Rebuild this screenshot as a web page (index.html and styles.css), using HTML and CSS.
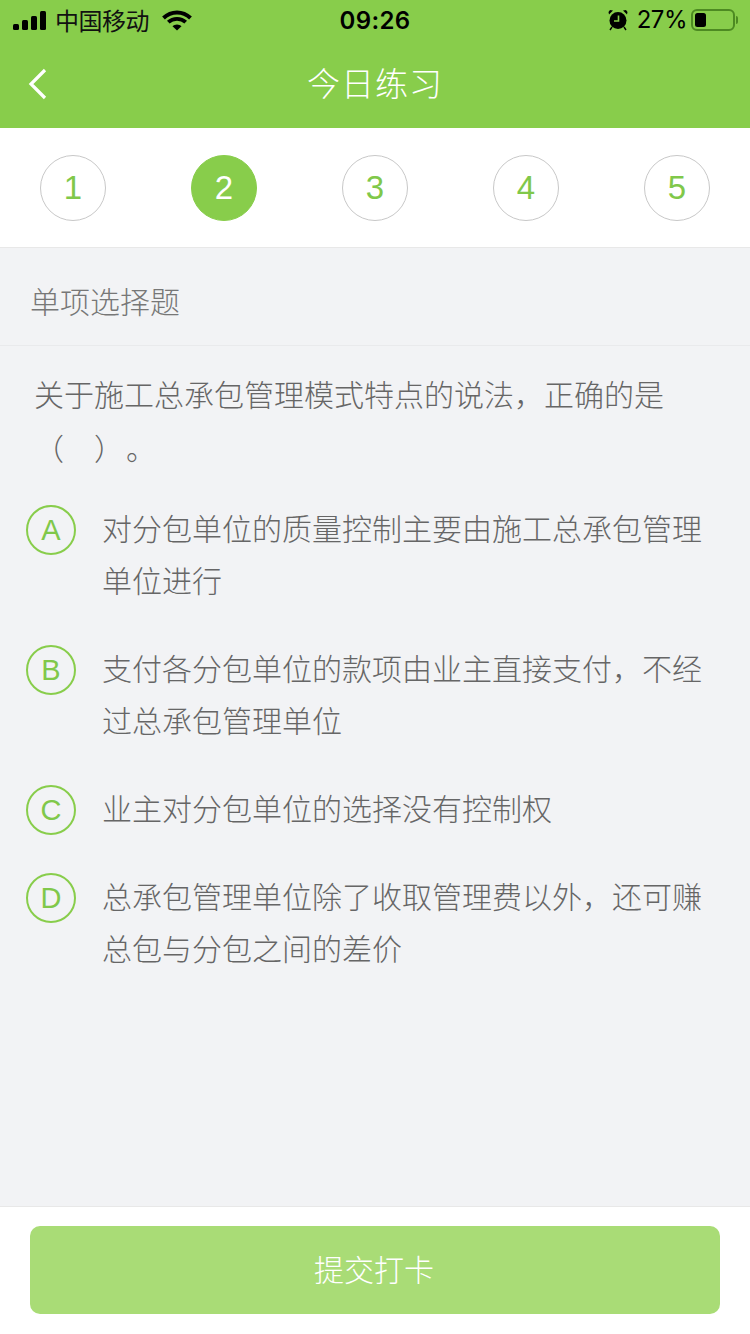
FILE: index.html
```html
<!DOCTYPE html>
<html lang="zh-CN">
<head>
<meta charset="utf-8">
<title>今日练习</title>
<link rel="stylesheet" href="styles.css">
</head>
<body>
<div class="page">
  <header class="top">
    <div class="status">
      <div class="status-left">
        <svg class="signal" width="34" height="20" viewBox="0 0 34 20"><rect x="0" y="13" width="6" height="6" rx="1.5"/><rect x="9" y="9" width="6" height="10" rx="1.5"/><rect x="18" y="5" width="6" height="14" rx="1.5"/><rect x="27" y="0" width="6" height="19" rx="1.5"/></svg>
        <span class="carrier">中国移动</span>
        <svg class="wifi" width="30" height="22" viewBox="0 0 30 22"><path d="M1.500 9C5.200 5.500 9.800 3.500 15 3.500s9.800 2 13.500 5.500" fill="none" stroke="#000" stroke-width="4"/><path d="M6.300 13.200C8.600 11 11.600 9.800 15 9.800s6.400 1.200 8.700 3.400" fill="none" stroke="#000" stroke-width="3.800"/><path d="M10.500 17.300c1.200-1.100 2.800-1.800 4.500-1.800s3.300.7 4.500 1.800L15 21.500z"/></svg>
      </div>
      <div class="time">09:26</div>
      <div class="status-right">
        <svg class="alarm" width="20" height="22" viewBox="0 0 20 22"><circle cx="10" cy="11.500" r="8.500"/><path d="M1 5.500 5 1.500 2 1 .5 3zM19 5.500 15 1.500 18 1 19.500 3z"/><path d="M4 18l-2 3M16 18l2 3" stroke="#000" stroke-width="1.400"/><path d="M10.500 6.500v5.500H6" fill="none" stroke="#88cd4b" stroke-width="1.600"/></svg>
        <span class="percent">27%</span>
        <div class="battery"><div class="battery-level"></div></div>
        <div class="battery-cap"></div>
      </div>
    </div>
    <div class="navbar">
      <svg class="back" width="20" height="32" viewBox="0 0 20 32"><path d="M17 2 3 16l14 14" fill="none" stroke="#fff" stroke-width="3.200"/></svg>
      <h1 class="title">今日练习</h1>
    </div>
  </header>

  <nav class="steps">
    <div class="step">1</div>
    <div class="step is-active">2</div>
    <div class="step">3</div>
    <div class="step">4</div>
    <div class="step">5</div>
  </nav>

  <main class="content">
    <div class="qtype">单项选择题</div>
    <p class="question">关于施工总承包管理模式特点的说法，正确的是<br>（　<span class="paren-close">）</span>。</p>
    <ul class="options">
      <li class="option"><span class="letter">A</span><span class="opt-text">对分包单位的质量控制主要由施工总承包管理单位进行</span></li>
      <li class="option"><span class="letter">B</span><span class="opt-text">支付各分包单位的款项由业主直接支付，不经过总承包管理单位</span></li>
      <li class="option"><span class="letter">C</span><span class="opt-text">业主对分包单位的选择没有控制权</span></li>
      <li class="option"><span class="letter">D</span><span class="opt-text">总承包管理单位除了收取管理费以外，还可赚总包与分包之间的差价</span></li>
    </ul>
  </main>

  <footer class="bottom">
    <button class="submit" type="button">提交打卡</button>
  </footer>
</div>
</body>
</html>
```
FILE: styles.css
```css
* { box-sizing: border-box; }
html, body { margin: 0; padding: 0; }
body { font-family: "Noto Sans CJK SC", "Liberation Sans", sans-serif; background: #f2f3f5; }
.page { width: 750px; height: 1334px; display: flex; flex-direction: column; overflow: hidden; }

.top { height: 128px; background: #88cd4b; flex: none; }
.status { height: 40px; display: flex; align-items: center; justify-content: space-between; padding: 0 12px 0 13px; position: relative; color: #000; }
.status-left { display: flex; align-items: center; gap: 8px; }
.signal { margin-top: 1px; }
.carrier { font-size: 24px; line-height: 40px; color: #111; width: 98px; letter-spacing: -0.500px; }
.wifi { margin-left: 1px; }
.time { position: absolute; left: 0; right: 0; top: 1px; text-align: center; font: 600 24px/40px "Inter", "Liberation Sans", sans-serif; letter-spacing: 0.400px; }
.status-right { display: flex; align-items: center; }
.alarm { margin-right: 9px; }
.percent { font: 400 24px/40px "Inter", "Liberation Sans", sans-serif; margin-right: 4px; letter-spacing: -0.500px; }
.battery { width: 44px; height: 22px; border: 2px solid #4d8a22; border-radius: 6px; padding: 2px; }
.battery-level { width: 11px; height: 14px; background: #000; border-radius: 2.500px; }
.battery-cap { width: 2px; height: 8px; background: #4d8a22; margin-left: 1px; border-radius: 0 2px 2px 0; }

.navbar { height: 88px; display: flex; align-items: flex-start; justify-content: center; position: relative; }
.back { position: absolute; left: 28px; top: 28px; }
.title { margin: 0; font-size: 33px; font-weight: 300; color: #fff; letter-spacing: 1px; line-height: 84px; }

.steps { height: 120px; flex: none; background: #fff; border-bottom: 1px solid #e8e8e8; display: flex; justify-content: space-between; align-items: flex-start; padding: 27px 40px 0; }
.step { width: 66px; height: 66px; border-radius: 50%; border: 1px solid #c8c8c8; color: #80c84a; font: 400 33px/64px "Liberation Sans", sans-serif; text-align: center; }
.step.is-active { background: #88cd4b; border-color: #88cd4b; color: #fff; }

.content { flex: 1; min-height: 0; background: #f2f3f5; }
.qtype { height: 98px; padding-left: 30px; line-height: 104px; font-size: 30px; font-weight: 300; color: #777; border-bottom: 1px solid #e9eaec; }
.question { margin: 20px 0 0; padding: 0 34px; font-size: 30px; font-weight: 300; line-height: 54px; color: #666; height: 108px; }
.paren-close { margin-right: 17px; }
.options { list-style: none; margin: 27px 0 0; padding: 0 26px; }
.option { display: flex; align-items: flex-start; margin-bottom: 36px; }
.letter { flex: none; width: 50px; height: 50px; margin: 4px 0 -2px; border: 2px solid #88cd4b; border-radius: 50%; color: #80c84a; font: 400 29px/46px "Liberation Sans", sans-serif; text-align: center; }
.opt-text { margin-left: 26px; width: 610px; font-size: 30px; font-weight: 300; line-height: 52px; color: #666; }

.bottom { height: 128px; flex: none; background: #fff; border-top: 1px solid #e8e8e8; padding: 19px 30px 0; }
.submit { display: block; width: 690px; height: 88px; padding: 0 2px 5px 0; border: 0; border-radius: 10px; background: #a9dc76; color: #fff; font-family: inherit; font-size: 30px; font-weight: 300; }
```
